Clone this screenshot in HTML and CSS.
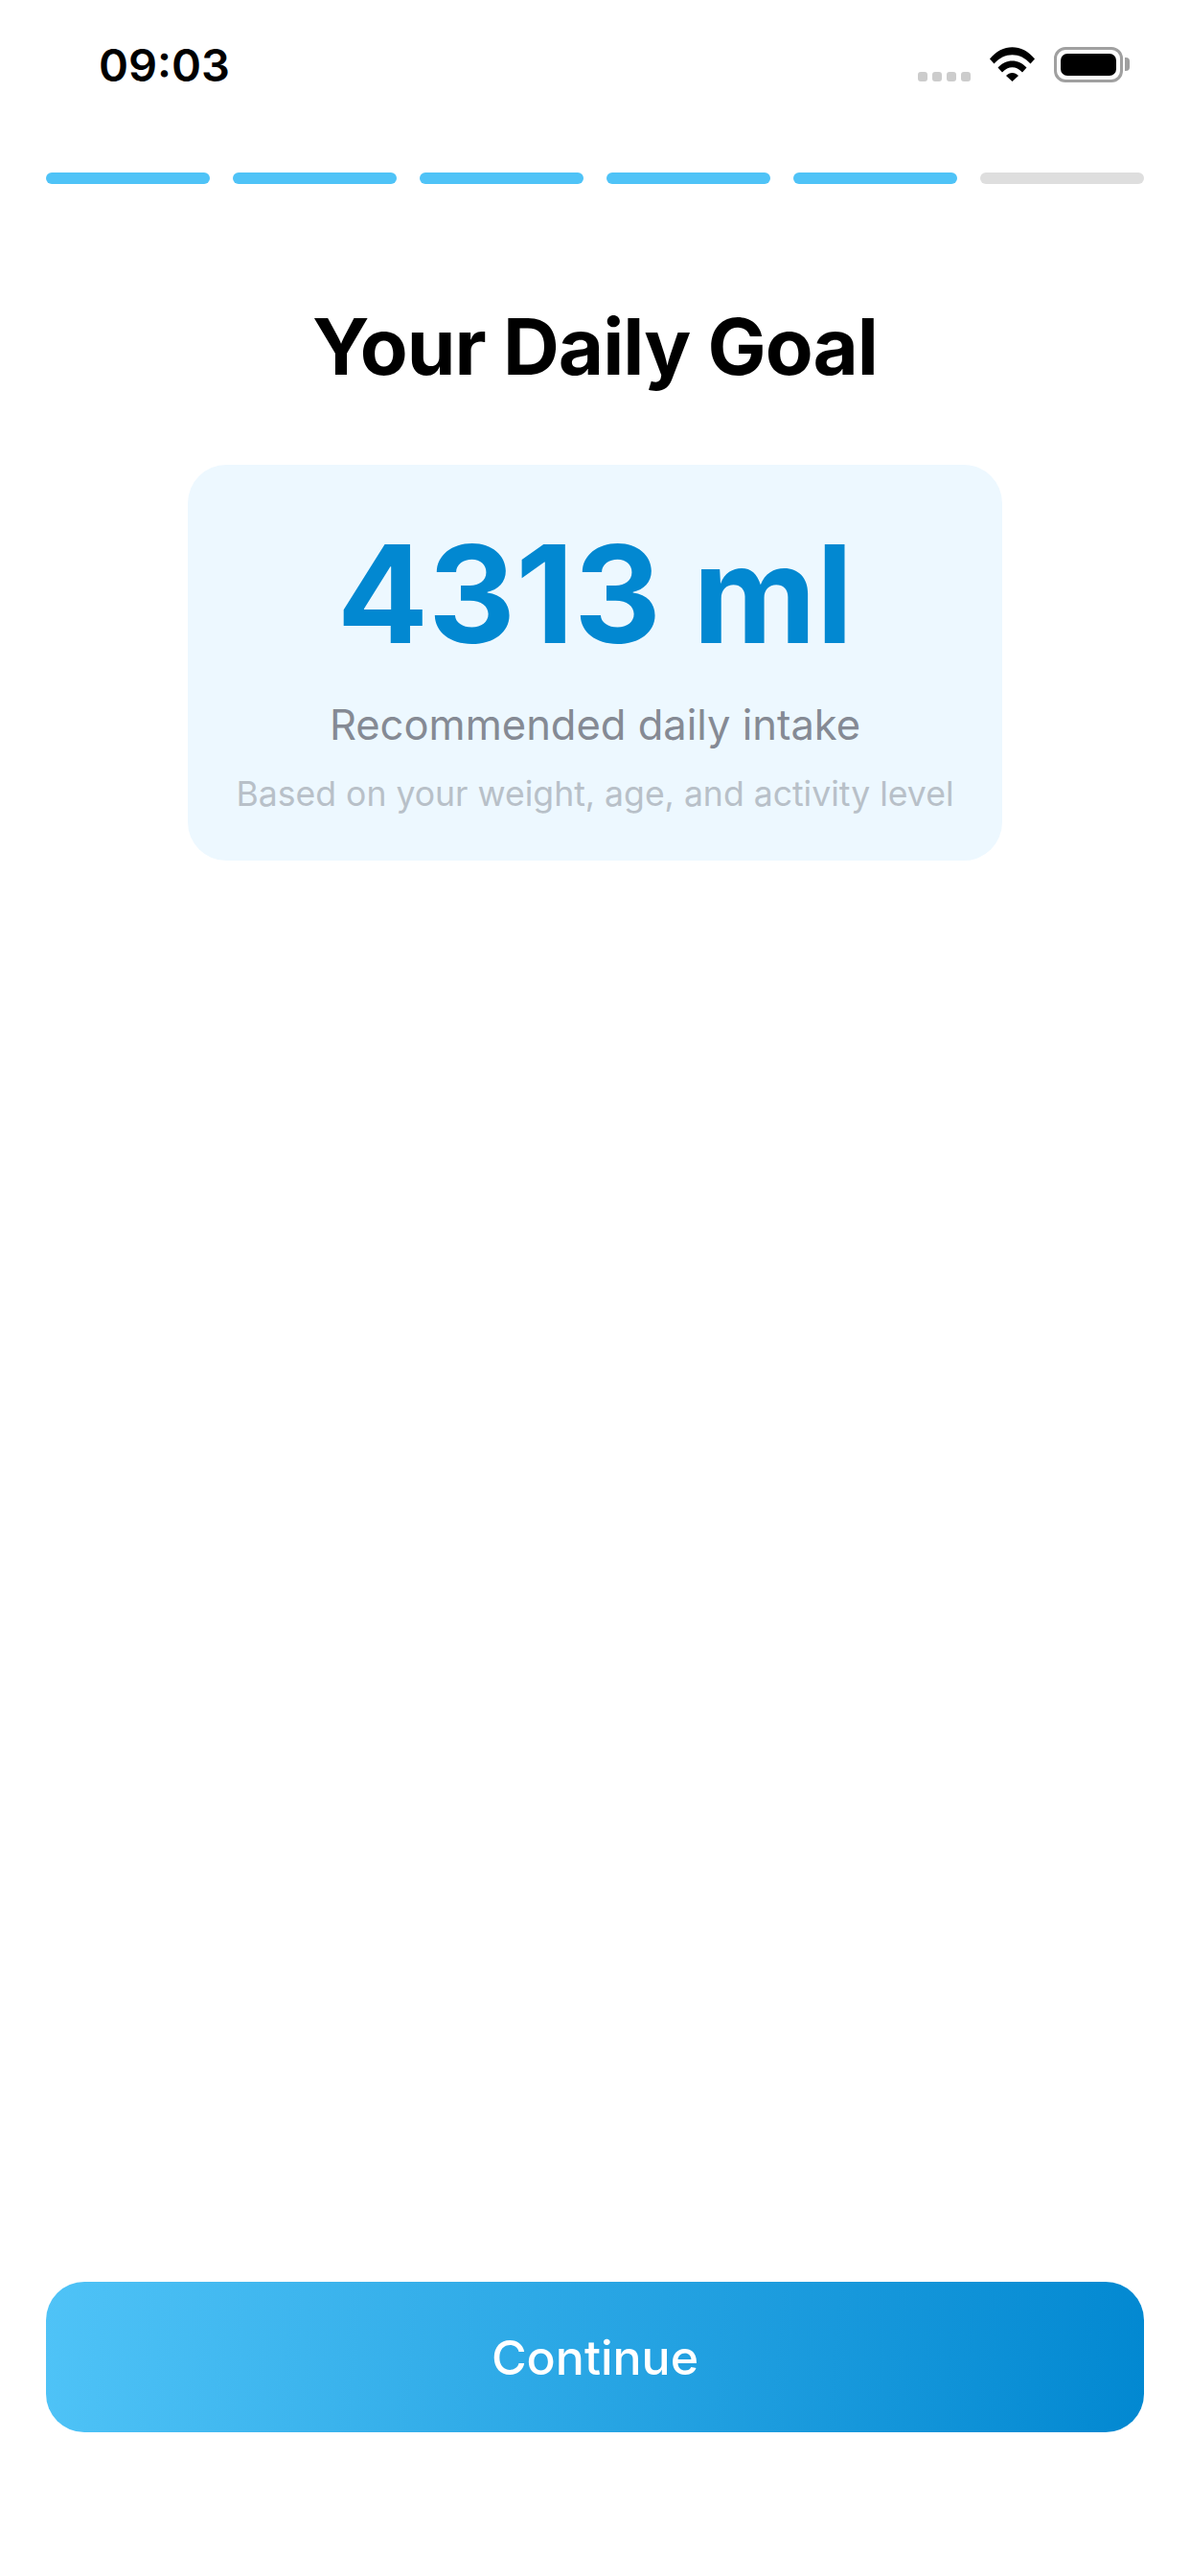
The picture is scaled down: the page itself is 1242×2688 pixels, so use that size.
FILE: index.html
```html
<!DOCTYPE html>
<html lang="en">
<head>
	<meta charset="UTF-8" name="viewport" content="width=device-width" />
	<title>Your Daily Goal</title>
	<link rel="stylesheet" href="styles.css">
</head>
<body>
	<div class="status-bar">
		<span class="time">09:03</span>
		<div class="status-icons">
			<div class="signal">
				<i></i><i></i><i></i><i></i>
			</div>
			<svg class="wifi" width="47" height="36" viewBox="0 0 47 36">
				<path d="M0 12.5 C13 -4 34 -4 47 12.5 L42.5 17.5 C32 5 15 5 4.500 17.500 Z" />
				<path d="M8.500 21.500 C17 12 30 12 38.500 21.500 L34 26.500 C27.500 19.500 19.500 19.500 13 26.500 Z" />
				<path d="M17 30 C21 26 26 26 30 30 L23.500 36 Z" />
			</svg>
			<div class="battery">
				<div class="battery-fill"></div>
			</div>
		</div>
	</div>

	<div class="progress">
		<div class="step done"></div>
		<div class="step done"></div>
		<div class="step done"></div>
		<div class="step done"></div>
		<div class="step done"></div>
		<div class="step"></div>
	</div>

	<main class="content">
		<h1 class="title">Your Daily Goal</h1>
		<div class="goal-card">
			<div class="goal-value">4313 ml</div>
			<div class="goal-label">Recommended daily intake</div>
			<div class="goal-note">Based on your weight, age, and activity level</div>
		</div>
	</main>

	<div class="footer">
		<button class="continue">Continue</button>
	</div>
</body>
</html>
```

FILE: styles.css
```css
* {
	box-sizing: border-box;
}
html, body {
	margin: 0;
	height: 100%;
}
body {
	display: flex;
	flex-direction: column;
	background: #fff;
	font-family: Inter, "Liberation Sans", sans-serif;
}

/* status bar */
.status-bar {
	display: flex;
	justify-content: space-between;
	align-items: flex-start;
	height: 180px;
	padding: 38px 70px 0 103px;
}
.time {
	font-size: 47px;
	font-weight: 600;
	line-height: 60px;
	color: #000;
}
.status-icons {
	display: flex;
	align-items: flex-start;
	padding-top: 11px;
}
.signal {
	display: flex;
	gap: 5px;
	margin: 26px 20px 0 0;
}
.signal i {
	width: 10px;
	height: 10px;
	border-radius: 3px;
	background: #ccc;
}
.wifi {
	fill: #000;
	margin-right: 20px;
}
.battery {
	position: relative;
	width: 72px;
	height: 37px;
	padding: 4px;
	border: 3px solid #a0a0a0;
	border-radius: 12px;
}
.battery::after {
	content: "";
	position: absolute;
	top: 8px;
	right: -10px;
	width: 5px;
	height: 14px;
	border-radius: 0 4px 4px 0;
	background: #a0a0a0;
}
.battery-fill {
	height: 100%;
	border-radius: 7px;
	background: #000;
}

/* progress steps */
.progress {
	display: flex;
	gap: 24px;
	padding: 0 48px;
}
.step {
	flex: 1;
	height: 12px;
	border-radius: 6px;
	background: #dedede;
}
.step.done {
	background: #4fc3f7;
}

.content {
	flex: 1;
	display: flex;
	flex-direction: column;
	align-items: center;
}
.title {
	margin: 121px 0 0;
	font-size: 81.5px;
	font-weight: 700;
	line-height: 98px;
	letter-spacing: -1px;
	color: #000;
}
.goal-card {
	width: 850px;
	height: 413px;
	margin-top: 74px;
	padding-top: 50px;
	border-radius: 40px;
	background: #edf8ff;
	text-align: center;
}
.goal-value {
	font-size: 141px;
	font-weight: 700;
	line-height: 170px;
	color: #0288d1;
}
.goal-label {
	margin-top: 25px;
	font-size: 43.5px;
	line-height: 52px;
	color: #858a94;
}
.goal-note {
	margin-top: 25px;
	font-size: 35.6px;
	line-height: 44px;
	color: #b8c0c8;
}

.footer {
	padding: 0 48px 150px;
}
.continue {
	display: block;
	width: 100%;
	height: 157px;
	border: 0;
	border-radius: 40px;
	background: linear-gradient(95deg, #4fc3f7, #0288d1);
	font-family: inherit;
	font-size: 50px;
	font-weight: 550;
	color: #fff;
}
```
